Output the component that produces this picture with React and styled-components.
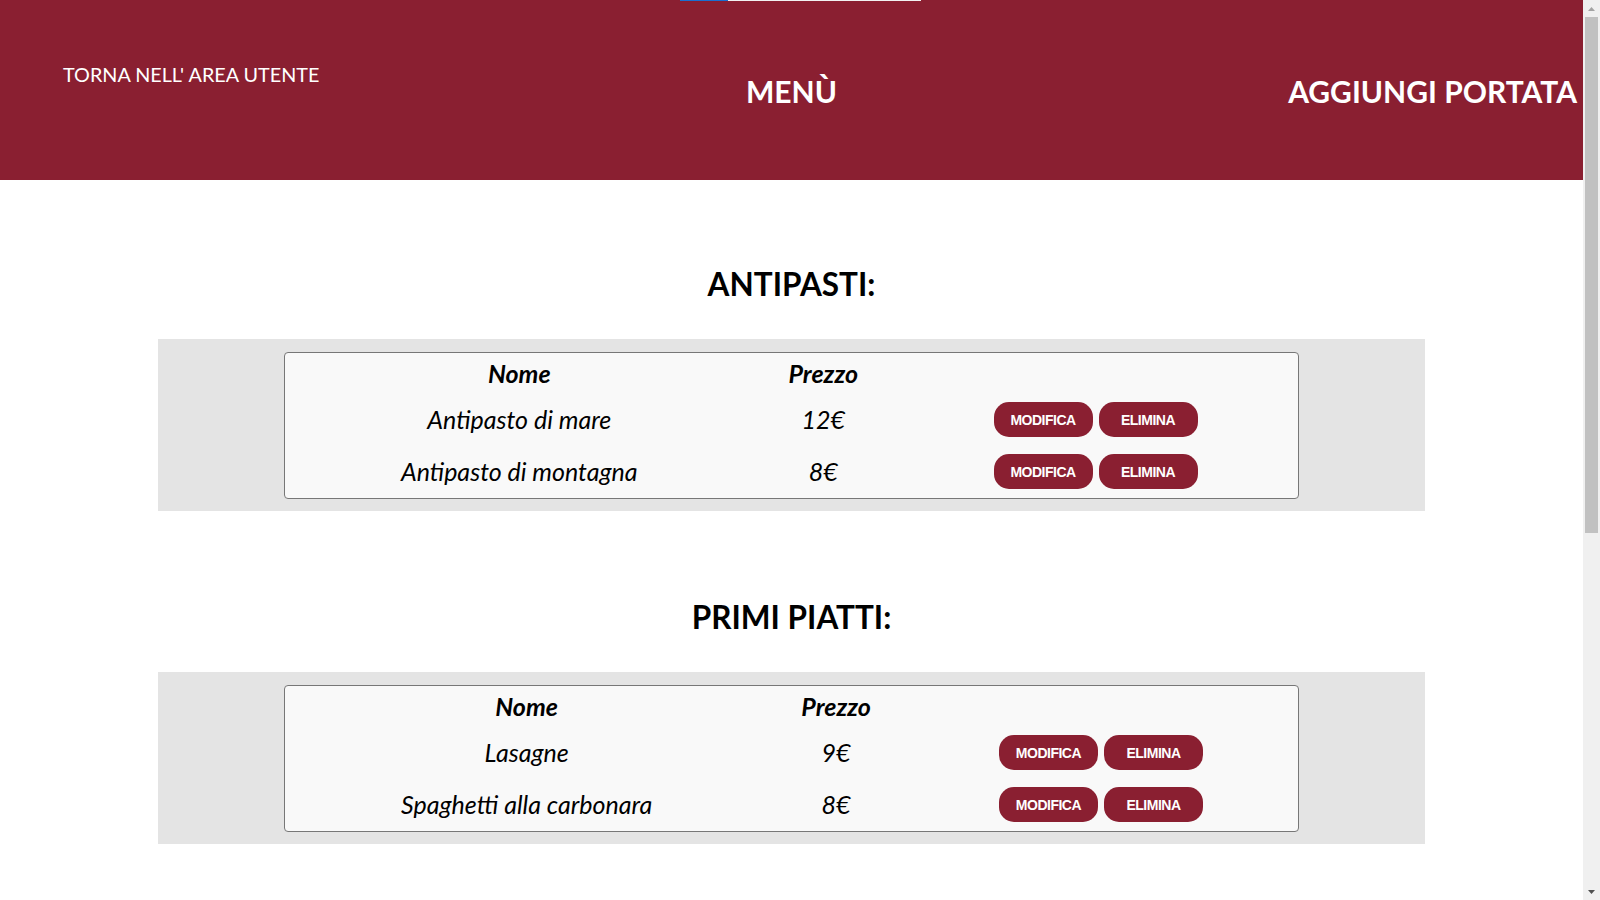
import React from 'react';
import styled, { createGlobalStyle } from 'styled-components';

const Global = createGlobalStyle`
  html, body { margin: 0; padding: 0; background: #ffffff; }
  body { font-family: Lato, "Noto Sans", sans-serif; color: #000; }
`;

const Page = styled.div`
  margin-right: 17px;
`;

const ScrollRail = styled.div`
  position: fixed;
  top: 0;
  right: 0;
  width: 17px;
  height: 100vh;
  background: #f0f0f0;
  display: flex;
  flex-direction: column;
  align-items: center;
  z-index: 10;
`;

const ScrollArrow = styled.div`
  width: 17px;
  height: 17px;
  display: flex;
  align-items: center;
  justify-content: center;
  flex: none;
`;

const ScrollThumb = styled.div`
  width: 13px;
  height: 516px;
  background: #c1c1c1;
  flex: none;
`;

const ScrollSpacer = styled.div`
  flex: 1;
`;

const Header = styled.header`
  position: relative;
  height: 180px;
  background: #8a1f31;
  display: grid;
  grid-template-columns: 1fr auto 1fr;
  align-items: center;
  color: #fff;
`;

const TopStrip = styled.div`
  position: absolute;
  top: 0;
  left: 680px;
  display: flex;
  height: 1px;
`;

const StripPart = styled.span`
  display: block;
  height: 1px;
  width: ${p => p.$w}px;
  background: ${p => p.$c};
`;

const BackLink = styled.a`
  justify-self: start;
  align-self: start;
  margin-top: 62px;
  padding-left: 63px;
  font-size: 19.8px;
  line-height: 24px;
  color: #fff;
  text-decoration: none;
`;

const HeaderTitle = styled.h1`
  margin: 0;
  font-size: 30px;
  font-weight: 700;
  line-height: 38px;
  justify-self: ${p => p.$align || 'center'};
  padding-right: ${p => (p.$align === 'end' ? '6px' : '0')};
  padding-top: 1px;
`;

const Section = styled.section`
  padding-top: 87px;
  &:first-child {
    padding-top: 85px;
  }
`;

const SectionTitle = styled.h2`
  margin: 0 0 36px;
  text-align: center;
  font-size: 31.5px;
  font-weight: 700;
  line-height: 38px;
`;

const Band = styled.div`
  width: 80%;
  margin: 0 auto;
  background: #e4e4e4;
  padding: 13px 0 12px;
  box-sizing: border-box;
`;

const Card = styled.div`
  width: 80%;
  margin: 0 auto;
  background: #f9f9f9;
  border: 1px solid #777;
  border-radius: 4px;
`;

const Table = styled.table`
  width: 100%;
  border-spacing: 2px;
  font-style: italic;
  font-size: 25px;
`;

const Th = styled.th`
  font-weight: 700;
  padding: 4px 1px;
  line-height: 29px;
`;

const Td = styled.td`
  text-align: center;
  vertical-align: middle;
  padding: 8px 1px 7px;
  line-height: 29px;
`;

const Actions = styled.div`
  display: flex;
  justify-content: center;
  gap: 6px;
`;

const Button = styled.button`
  width: 99px;
  height: 35px;
  padding: 0;
  border: none;
  border-radius: 15px;
  background: #8a1f31;
  color: #fff;
  font-family: "Liberation Sans", Arial, sans-serif;
  font-weight: 700;
  font-style: normal;
  font-size: 14px;
  letter-spacing: -0.5px;
  cursor: pointer;
`;

const menu = [
  { title: 'ANTIPASTI:', items: [['Antipasto di mare', '12€'], ['Antipasto di montagna', '8€']] },
  { title: 'PRIMI PIATTI:', items: [['Lasagne', '9€'], ['Spaghetti alla carbonara', '8€']] },
  { title: 'SECONDI PIATTI:', items: [['Tagliata di manzo', '15€'], ['Frittura di pesce', '14€']] },
  { title: 'DOLCI:', items: [['Tiramisù', '5€'], ['Panna cotta', '4€']] },
];

export default function App() {
  return (
    <>
      <Global />
      <Page>
        <Header>
          <TopStrip>
            <StripPart $w={48} $c="#1a6fd0" />
            <StripPart $w={193} $c="#f2f2f2" />
          </TopStrip>
          <BackLink href="#">TORNA NELL' AREA UTENTE</BackLink>
          <HeaderTitle>MENÙ</HeaderTitle>
          <HeaderTitle $align="end">AGGIUNGI PORTATA</HeaderTitle>
        </Header>
        <main>
          {menu.map(sec => (
            <Section key={sec.title}>
              <SectionTitle>{sec.title}</SectionTitle>
              <Band>
                <Card>
                  <Table>
                    <thead>
                      <tr>
                        <Th>Nome</Th>
                        <Th>Prezzo</Th>
                        <Th></Th>
                      </tr>
                    </thead>
                    <tbody>
                      {sec.items.map(([name, price]) => (
                        <tr key={name}>
                          <Td>{name}</Td>
                          <Td>{price}</Td>
                          <Td>
                            <Actions>
                              <Button>MODIFICA</Button>
                              <Button>ELIMINA</Button>
                            </Actions>
                          </Td>
                        </tr>
                      ))}
                    </tbody>
                  </Table>
                </Card>
              </Band>
            </Section>
          ))}
        </main>
      </Page>
      <ScrollRail aria-hidden="true">
        <ScrollArrow>
          <svg width="7" height="4" viewBox="0 0 7 4"><path d="M3.5 0 L7 4 L0 4 Z" fill="#a3a3a3" /></svg>
        </ScrollArrow>
        <ScrollThumb />
        <ScrollSpacer />
        <ScrollArrow>
          <svg width="7" height="4" viewBox="0 0 7 4"><path d="M0 0 L7 0 L3.5 4 Z" fill="#505050" /></svg>
        </ScrollArrow>
      </ScrollRail>
    </>
  );
}
